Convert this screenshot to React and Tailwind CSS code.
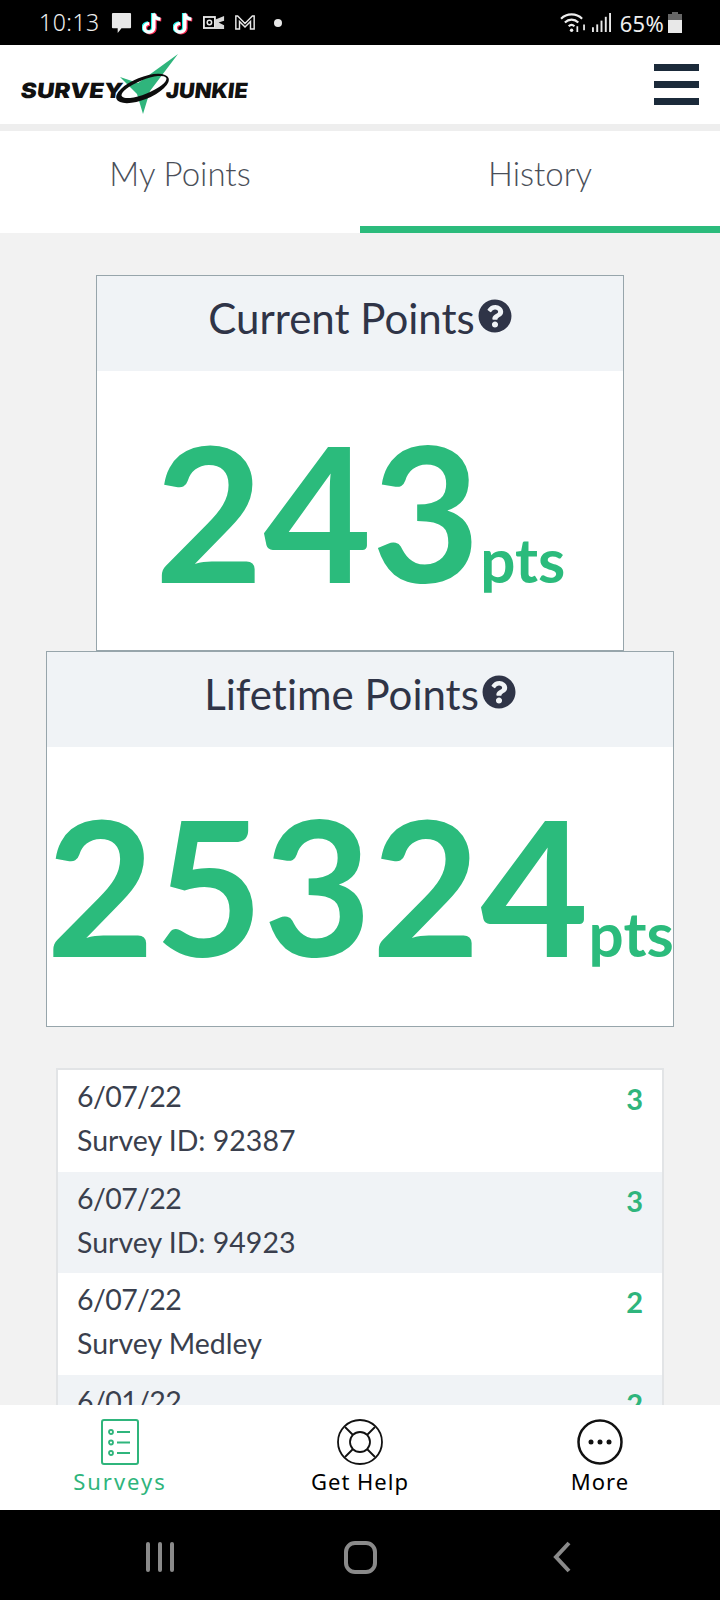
import { FaQuestionCircle } from "react-icons/fa";

const rows = [
  { date: "6/07/22", label: "Survey ID: 92387", pts: 3 },
  { date: "6/07/22", label: "Survey ID: 94923", pts: 3, alt: true },
  { date: "6/07/22", label: "Survey Medley", pts: 2 },
  { date: "6/01/22", label: "Survey Medley", pts: 2, alt: true },
];

const TikTok = ({ className }) => (
  <svg viewBox="3 0 16 20" preserveAspectRatio="none" className={className}>
    <path d="M12 2v12a3.6 3.6 0 1 1-3.6-3.6M12 2c.3 2.8 2.2 4.6 5 4.800" fill="none" stroke="#ff2b55" strokeWidth="3" transform="translate(.7 .5)" />
    <path d="M12 2v12a3.6 3.6 0 1 1-3.6-3.6M12 2c.3 2.8 2.2 4.6 5 4.800" fill="none" stroke="#25f4ee" strokeWidth="3" transform="translate(-.7 -.3)" />
    <path d="M12 2v12a3.6 3.6 0 1 1-3.6-3.6M12 2c.3 2.8 2.2 4.6 5 4.800" fill="none" stroke="#fff" strokeWidth="2.600" />
  </svg>
);

const StatusBar = () => (
  <div className="h-[45px] bg-black flex items-center pl-[39px] pr-[38px] text-[#eeeeee] font-['Noto_Sans',sans-serif] shrink-0">
    <span className="text-[23px] tracking-[0.5px] leading-none w-[62px] font-light">10:13</span>
    <svg viewBox="0 0 22 22" className="w-[21px] h-[21px] ml-[10px]"><path d="M2 1h18a1 1 0 0 1 1 1v14a1 1 0 0 1-1 1H11l-4 5v-5H2a1 1 0 0 1-1-1V2a1 1 0 0 1 1-1z" fill="#e8e8e8" /></svg>
    <TikTok className="w-[21px] h-[24px] ml-[10px]" />
    <TikTok className="w-[21px] h-[24px] ml-[10px]" />
    <svg viewBox="0 0 24 16" className="w-[22px] h-[15px] ml-[9px]"><rect x="1" y="2" width="12" height="12" fill="none" stroke="#e8e8e8" strokeWidth="2" /><circle cx="7" cy="8" r="2.400" fill="none" stroke="#e8e8e8" strokeWidth="1.600" /><path d="M13 5l10-4v5l-6 2 6 3v4H13z" fill="#d8d8d8" /></svg>
    <svg viewBox="0 0 24 18" className="w-[22px] h-[17px] ml-[9px]"><path d="M2 16V2h2l8 8 8-8h2v14h-4V8l-6 6-6-6v8z" fill="none" stroke="#e8e8e8" strokeWidth="1.600" /></svg>
    <span className="w-[8px] h-[8px] rounded-full bg-[#e8e8e8] ml-[18px]" />
    <div className="flex-1" />
    <svg viewBox="0 0 28 24" className="w-[27px] h-[23px]"><g fill="none" stroke="#eeeeee" strokeWidth="2.200"><path d="M1 8c6-6 16-6 22 0" /><path d="M5 12c4-4 10-4 14 0" /><path d="M9 16c2-2 4-2 6 0" /></g><circle cx="12" cy="20" r="1.800" fill="#eeeeee" /><path d="M18 16v6M25 14v6" stroke="#eeeeee" strokeWidth="1.800" /></svg>
    <svg viewBox="0 0 20 20" className="w-[19px] h-[19px] ml-[5px]"><g fill="#e8e8e8"><rect x="0" y="15" width="2" height="5" /><rect x="4.500" y="12" width="2" height="8" /><rect x="9" y="8" width="2" height="12" /><rect x="13.500" y="4" width="2" height="16" /><rect x="18" y="0" width="2" height="20" /></g></svg>
    <span className="text-[22px] leading-none ml-[9px] tracking-[0.3px]">65%</span>
    <svg viewBox="0 0 14 21" className="w-[14px] h-[21px] ml-[4px]"><path d="M4 0h6v2h4v6H0V2h4z" fill="#666" /><rect y="8" width="14" height="13" fill="#e8e8e8" /></svg>
  </div>
);

const Logo = () => (
  <div className="relative w-[228px] h-[60px] ml-[21px] font-['Inter',sans-serif] font-black text-[#111] text-[21px] leading-none">
    <span className="absolute left-0 top-[25px] scale-x-[1.15] -skew-x-6 origin-left">SURVEY</span>
    <span className="absolute left-[145px] top-[25px] scale-x-[1.04] -skew-x-6 origin-left">JUNKIE</span>
    <svg viewBox="0 0 66 64" className="absolute left-[94px] top-[-2px] w-[66px] h-[64px]">
      <path d="M5 24l18 6L63 1 35 38l-7 23-6-20z" fill="#2fb57c" />
      <path d="M1.500 46A28 11-22 1 1 53.500 25 28 11-22 1 1 1.500 46ZM6.700 43A24 7-22 1 0 51.300 25 24 7-22 1 0 6.700 43Z" fill="#0d0d0d" fillRule="evenodd" />
    </svg>
  </div>
);

const Header = () => (
  <div className="h-[79px] bg-white flex items-center justify-between shrink-0">
    <Logo />
    <div className="flex flex-col gap-[10px] mr-[21px]">
      <div className="w-[45px] h-[7px] bg-[#1b2a3a]" />
      <div className="w-[45px] h-[7px] bg-[#1b2a3a]" />
      <div className="w-[45px] h-[7px] bg-[#1b2a3a]" />
    </div>
  </div>
);

const Tabs = () => (
  <div className="h-[102px] mt-[7px] bg-white flex text-[33px] text-[#4a4f59] font-light shrink-0">
    <div className="w-1/2 flex items-center justify-center pb-[16px]">My Points</div>
    <div className="w-1/2 flex items-center justify-center pb-[9px] border-b-[7px] border-[#2bbb7c]">History</div>
  </div>
);

const PointsCard = ({ title, value, className, bodyClass }) => (
  <div className={`border border-[#97a5ab] bg-white ${className}`}>
    <div className="h-[95px] bg-[#f0f3f6] flex items-center justify-center text-[42px] text-[#2f3447] pb-[10px] [font-variant-ligatures:none]">
      {title}
      <FaQuestionCircle className="w-[34px] h-[34px] text-[#2f3447] mb-[6px] ml-[3px] shrink-0" />
    </div>
    <div className={`flex items-baseline justify-center font-bold text-[#2bbb7c] ${bodyClass}`}>
      <span className="text-[187px] leading-none">{value}</span>
      <span className="text-[62px] leading-none">pts</span>
    </div>
  </div>
);

const HistoryRow = ({ date, label, pts, alt }) => (
  <div className={`h-[101.500px] pl-[19px] pr-[19px] pt-[5px] flex justify-between shrink-0 ${alt ? "bg-[#f0f3f6]" : "bg-white"}`}>
    <div className="text-[28.500px] text-[#3a3f4d]">
      <div className="leading-[43px] tracking-[-0.6px]">{date}</div>
      <div className="leading-[44px]">{label}</div>
    </div>
    <div className="text-[29px] leading-[44px] mt-[2px] font-bold text-[#2fb57c]">{pts}</div>
  </div>
);

const NavItem = ({ label, color, tracking, children }) => (
  <div className="flex-1 flex flex-col items-center pt-[14px]">
    {children}
    <span className={`text-[22px] leading-[30px] mt-[1px] font-['Noto_Sans',sans-serif] ${tracking} ${color}`}>{label}</span>
  </div>
);

const BottomNav = () => (
  <div className="h-[105px] bg-white flex shrink-0">
    <div className="w-[240px] flex">
      <NavItem label="Surveys" color="text-[#2fb57c]" tracking="tracking-[2px]">
        <svg viewBox="0 0 38 46" className="w-[38px] h-[46px]">
          <rect x="1" y="1" width="36" height="44" rx="2" fill="none" stroke="#2fb57c" strokeWidth="2" />
          <g fill="none" stroke="#2fb57c" strokeWidth="1.800">
            <circle cx="10" cy="13" r="2" /><circle cx="10" cy="23.500" r="2" /><circle cx="10" cy="34" r="2" />
            <path d="M16 13h13M16 23.500h13M16 34h13" />
          </g>
        </svg>
      </NavItem>
    </div>
    <div className="w-[240px] flex">
      <NavItem label="Get Help" color="text-black" tracking="tracking-[1px]">
        <svg viewBox="0 0 46 46" className="w-[46px] h-[46px]">
          <g fill="none" stroke="#111" strokeWidth="1.800">
            <circle cx="23" cy="23" r="22" />
            <circle cx="23" cy="23" r="10" />
            <path d="M8 8l8 8M38 8l-8 8M8 38l8-8M38 38l-8-8" />
          </g>
        </svg>
      </NavItem>
    </div>
    <div className="w-[240px] flex">
      <NavItem label="More" color="text-black" tracking="tracking-[1px]">
        <svg viewBox="0 0 46 46" className="w-[46px] h-[46px]">
          <circle cx="23" cy="23" r="21.500" fill="none" stroke="#111" strokeWidth="2.500" />
          <circle cx="14" cy="23" r="2.500" fill="#111" /><circle cx="23" cy="23" r="2.500" fill="#111" /><circle cx="32" cy="23" r="2.500" fill="#111" />
        </svg>
      </NavItem>
    </div>
  </div>
);

const SystemBar = () => (
  <div className="h-[90px] bg-black flex items-center shrink-0 pt-[4px]">
    <div className="w-[320px] flex justify-center gap-[8px]">
      <div className="w-[4px] h-[30px] bg-[#8a8a8a] rounded-sm" />
      <div className="w-[4px] h-[30px] bg-[#8a8a8a] rounded-sm" />
      <div className="w-[4px] h-[30px] bg-[#8a8a8a] rounded-sm" />
    </div>
    <div className="w-[80px] flex justify-center">
      <div className="w-[33px] h-[33px] border-[4px] border-[#8a8a8a] rounded-[11px]" />
    </div>
    <div className="flex-1 flex justify-center">
      <svg viewBox="0 0 20 32" className="w-[20px] h-[32px] ml-[4px]"><path d="M17 2L4 16l13 14" fill="none" stroke="#8a8a8a" strokeWidth="4" /></svg>
    </div>
  </div>
);

export default function App() {
  return (
    <div className="h-[1600px] w-[720px] flex flex-col overflow-hidden bg-[#eeeeee] font-['Lato',sans-serif]">
      <StatusBar />
      <Header />
      <Tabs />
      <div className="flex-1 min-h-0 overflow-hidden bg-[#f2f2f2] flex flex-col items-center pt-[42px]">
        <PointsCard title="Current Points" value="243" className="w-[528px] h-[376px] shrink-0" bodyClass="pt-[46px]" />
        <PointsCard title="Lifetime Points" value="25324" className="w-[628px] h-[376px] shrink-0" bodyClass="pt-[44px]" />
        <div className="w-[608px] mt-[41px] border-2 border-[#e2e4e6] shrink-0 flex flex-col">
          {rows.map((r, i) => <HistoryRow key={i} {...r} />)}
        </div>
      </div>
      <BottomNav />
      <SystemBar />
    </div>
  );
}
